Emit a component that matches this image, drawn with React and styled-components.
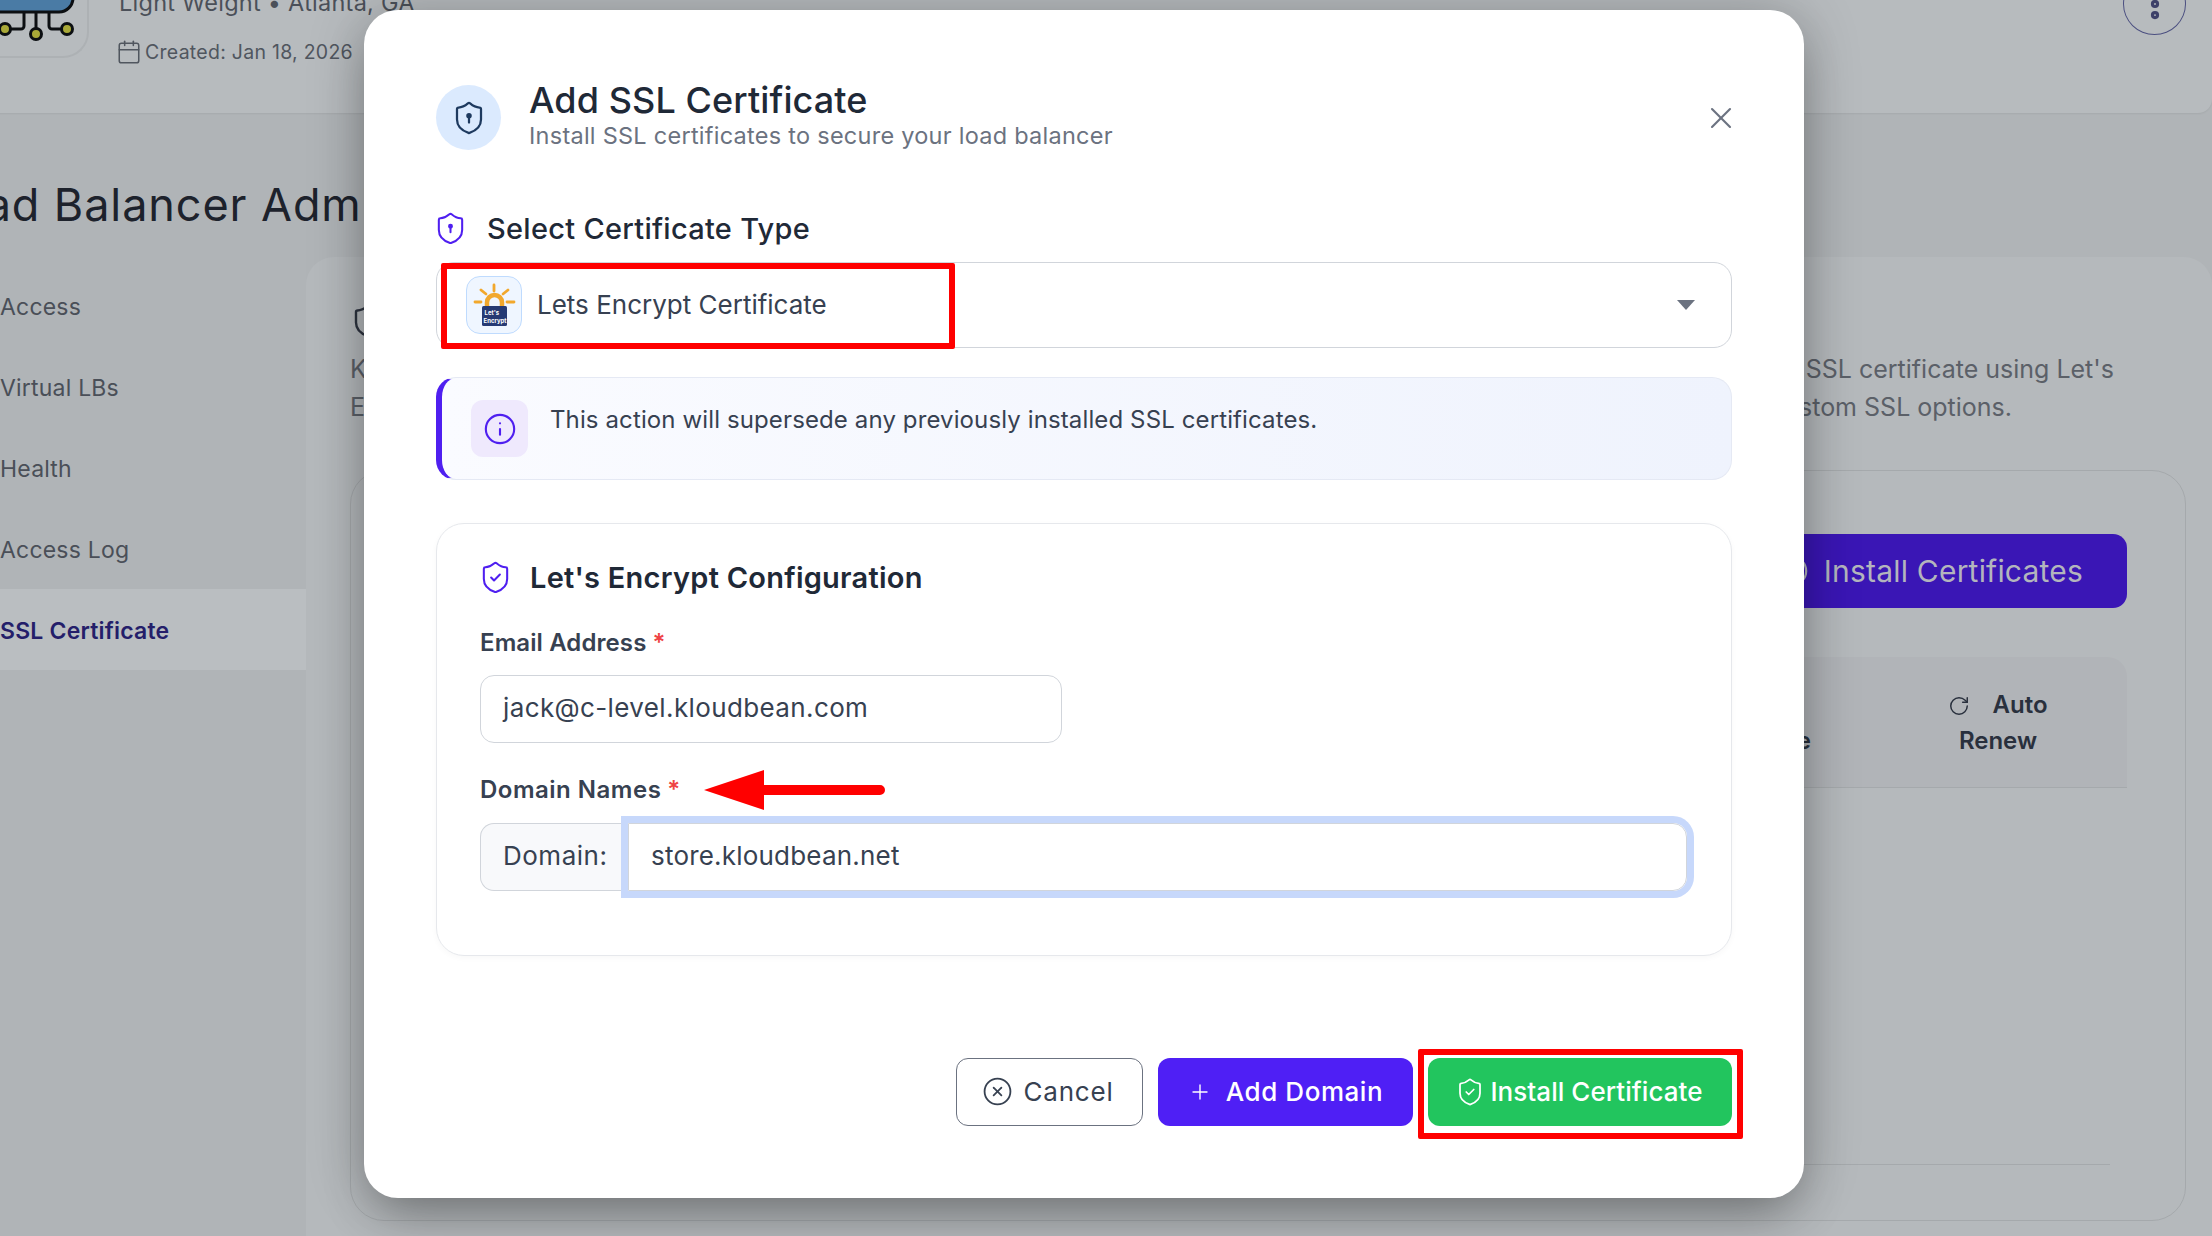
import React from "react";
import styled, { createGlobalStyle } from "styled-components";
import {
  Calendar,
  CircleCheck,
  CircleX,
  EllipsisVertical,
  Info,
  Plus,
  RotateCw,
  Shield,
  ShieldCheck,
  X,
} from "lucide-react";

const GlobalStyle = createGlobalStyle`
  html, body {
    margin: 0;
    padding: 0;
    background: #b0b4b7;
  }
  body {
    font-family: Inter, "Open Sans", "Liberation Sans", sans-serif;
  }
  * {
    box-sizing: border-box;
  }
`;

const Screen = styled.div`
  position: relative;
  width: 2212px;
  height: 1236px;
  overflow: hidden;
  background: #b0b4b7;
`;

/* page behind the dialog, scrolled a bit to the right and down */
const Page = styled.div`
  width: 2262px;
  margin: -60px 0 0 -50px;
`;

const TopCard = styled.header`
  display: flex;
  height: 173px;
  padding-right: 26px;
  background: #b7bbbe;
  border-radius: 0 0 14px 14px;
  box-shadow: 0 1px 2px rgba(0, 0, 0, 0.06);
`;

const ServerTile = styled.div`
  width: 139px;
  height: 118px;
  margin-right: 30px;
  border: 2px solid #adb1b4;
  border-left: 0;
  border-top: 0;
  border-radius: 0 0 26px 0;
  overflow: hidden;
`;

const ServerInfo = styled.div`
  flex: 1;
  padding-top: 48px;
`;

const ServerName = styled.div`
  height: 30px;
  font-size: 23.5px;
  line-height: 30px;
  letter-spacing: 0.25px;
  color: #4b5059;
`;

const Created = styled.div`
  display: flex;
  align-items: center;
  gap: 3px;
  height: 28px;
  margin-top: 20px;
  font-size: 19.5px;
  letter-spacing: 0.27px;
  color: #50565f;

  svg {
    margin-left: -3px;
  }
`;

const Kebab = styled.div`
  display: flex;
  align-items: center;
  justify-content: center;
  width: 63px;
  height: 62px;
  margin-top: 33px;
  border: 1px solid #4b4f80;
  border-radius: 50%;
  color: #3d4069;
`;

const PageTitle = styled.h1`
  height: 60px;
  margin: 62px 0 22px -19px;
  font-size: 45px;
  font-weight: 400;
  line-height: 60px;
  letter-spacing: 0.9px;
  color: #1d222c;
  white-space: nowrap;
`;

const Body = styled.div`
  display: flex;
  align-items: flex-start;
`;

const Sidebar = styled.nav`
  flex: none;
  width: 356px;
  padding-top: 7.5px;
`;

const SideItem = styled.div`
  display: flex;
  align-items: center;
  height: 81px;
  padding: 3px 0 0 50px;
  font-size: 23px;
  letter-spacing: 0.2px;
  font-weight: ${(p) => (p.$active ? 600 : 400)};
  color: ${(p) => (p.$active ? "#241e6a" : "#4a4f58")};
  background: ${(p) => (p.$active ? "#babec1" : "transparent")};
`;

const Panel = styled.main`
  flex: 1;
  height: 1000px;
  padding: 46px 26px 0 44px;
  background: #b5b9bc;
  border-radius: 28px 28px 0 0;
`;

const PanelIcon = styled.div`
  height: 30px;
  margin-bottom: 17px;
  color: #2e3440;
`;

const Description = styled.div`
  margin-bottom: 44px;
`;

const DescLine = styled.div`
  display: flex;
  justify-content: space-between;
  height: 38px;
  padding-right: ${(p) => p.$end}px;
  font-size: 25px;
  line-height: 38px;
  color: #5b6068;
`;

const InnerCard = styled.section`
  height: 751px;
  padding: 63px 58px 0 43px;
  border: 1px solid #a5a9ac;
  border-radius: 34px;
`;

const ActionBar = styled.div`
  display: flex;
  justify-content: flex-end;
  margin-bottom: 49px;
`;

const InstallAll = styled.div`
  display: flex;
  align-items: center;
  justify-content: flex-end;
  gap: 15px;
  width: 364px;
  height: 74px;
  padding-right: 44px;
  background: #3a16b5;
  border-radius: 14px;
  font-size: 30px;
  letter-spacing: 0.2px;
  color: #b3b5bd;
`;

const TableHead = styled.div`
  display: flex;
  justify-content: flex-end;
  padding: 30px 29px 28px 0;
  background: #b1b4b8;
  border-bottom: 1px solid #a5a9ac;
  border-radius: 20px 20px 0 0;
`;

const HeadCell = styled.div`
  width: ${(p) => p.$w}px;
  margin-right: ${(p) => p.$gap || 0}px;
  text-align: ${(p) => p.$align};
  font-size: 24px;
  font-weight: 600;
  line-height: 36px;
  color: #29303d;

  svg {
    margin-right: 22px;
    vertical-align: -4px;
  }
`;

const TableEnd = styled.div`
  height: 1px;
  margin: 376px 17px 0 0;
  background: #a5a9ac;
`;

const Overlay = styled.div`
  position: absolute;
  inset: 0;
  padding: 10px 0 0 364px;
`;

const Dialog = styled.div`
  display: flex;
  flex-direction: column;
  width: 1440px;
  height: 1188px;
  padding: 75px 72px 0;
  background: #fff;
  border-radius: 34px;
  box-shadow: 0 0 60px rgba(0, 0, 0, 0.2), 0 24px 50px -10px rgba(0, 0, 0, 0.3);
`;

const DialogHead = styled.div`
  display: flex;
  align-items: center;
  height: 65px;
`;

const HeadBadge = styled.div`
  display: flex;
  flex: none;
  align-items: center;
  justify-content: center;
  width: 65px;
  height: 65px;
  margin-right: 28px;
  background: #dbeafe;
  border-radius: 50%;
  color: #1e3a5f;
`;

const HeadText = styled.div`
  flex: 1;
  padding-bottom: 7px;
`;

const DialogTitle = styled.h2`
  margin: 0;
  font-size: 36px;
  font-weight: 500;
  line-height: 43px;
  letter-spacing: 0.1px;
  color: #1f2937;
`;

const DialogSub = styled.p`
  margin: 0;
  font-size: 23.5px;
  line-height: 28px;
  letter-spacing: 0.26px;
  color: #6b7280;
`;

const CloseIcon = styled.div`
  display: flex;
  margin-right: -7px;
  color: #6b7280;
`;

const SectionHead = styled.div`
  display: flex;
  align-items: center;
  gap: 24px;
  height: 30px;
  margin: 64px 0 18px;
  padding-bottom: 2px;
  font-size: 29px;
  font-weight: 500;
  letter-spacing: 0.28px;
  color: #1f2937;

  svg {
    margin: 0 -5px 0 -3px;
    color: #4f1ff0;
  }
`;

const Select = styled.div`
  position: relative;
  display: flex;
  align-items: center;
  height: 86px;
  padding: 0 36px 0 29px;
  border: 1px solid #d1d5db;
  border-radius: 18px;
  font-size: 26px;
  color: #374151;
`;

const LogoTile = styled.div`
  display: flex;
  align-items: center;
  justify-content: center;
  width: 56px;
  height: 58px;
  margin-right: 15px;
  background: #eff6ff;
  border: 1px solid #bfdbfe;
  border-radius: 14px;
`;

const SelectValue = styled.div`
  flex: 1;
  padding-bottom: 2px;
`;

const Caret = styled.div`
  width: 0;
  height: 0;
  border-left: 9px solid transparent;
  border-right: 9px solid transparent;
  border-top: 10px solid #6b7280;
`;

const Highlight = styled.div`
  position: absolute;
  top: 0;
  left: 4px;
  width: 514px;
  height: 86px;
  border: 6px solid #ff0000;
  border-radius: 2px;
  pointer-events: none;
`;

const Notice = styled.div`
  display: flex;
  height: 103px;
  margin-top: 29px;
  padding: 22px 0 0 29px;
  background: linear-gradient(90deg, #fafbff, #eff3fd);
  border: 1px solid #e5e9f4;
  border-left: 6px solid #4f1ff0;
  border-radius: 20px;
`;

const NoticeIcon = styled.div`
  display: flex;
  flex: none;
  align-items: center;
  justify-content: center;
  width: 57px;
  height: 57px;
  margin-right: 22px;
  background: #efe9fd;
  border-radius: 12px;
  color: #4f1ff0;
`;

const NoticeText = styled.div`
  padding-top: 3px;
  font-size: 24px;
  line-height: 34px;
  letter-spacing: 0.12px;
  color: #374151;
`;

const ConfigCard = styled.section`
  height: 433px;
  margin-top: 43px;
  padding: 39px 44px 0 43px;
  border: 1px solid #e6e8ec;
  border-radius: 28px;
  box-shadow: 0 2px 6px rgba(0, 0, 0, 0.03);
`;

const ConfigHead = styled.div`
  display: flex;
  align-items: center;
  gap: 24px;
  height: 30px;
  margin-bottom: 33px;
  padding-bottom: 1px;
  font-size: 29px;
  font-weight: 600;
  letter-spacing: 0.25px;
  color: #1f2937;

  svg {
    margin: 0 -7px 0 -2px;
    color: #4f1ff0;
  }
`;

const FieldLabel = styled.div`
  display: flex;
  align-items: center;
  gap: 6px;
  height: 34px;
  margin-bottom: ${(p) => p.$below}px;
  padding-bottom: 2px;
  font-size: 24px;
  font-weight: 600;
  letter-spacing: ${(p) => p.$ls}px;
  color: #374151;
`;

const Required = styled.span`
  color: #ef4444;
`;

const RedArrow = styled.svg`
  margin: 2px 0 0 17px;
`;

const TextField = styled.div`
  display: flex;
  align-items: center;
  width: 582px;
  height: 68px;
  margin-bottom: 30px;
  padding: 0 0 4px 22px;
  border: 1px solid #d1d5db;
  border-radius: 14px;
  font-size: 26px;
  letter-spacing: 0.38px;
  color: #374151;
`;

const DomainGroup = styled.div`
  display: flex;
  height: 68px;
`;

const DomainPrefix = styled.div`
  display: flex;
  flex: none;
  align-items: center;
  width: 148px;
  padding: 0 0 4px 22px;
  background: #f8f9fb;
  border: 1px solid #d1d5db;
  border-right: 0;
  border-radius: 14px 0 0 14px;
  font-size: 26px;
  letter-spacing: 0.5px;
  color: #374151;
`;

const DomainInput = styled.div`
  display: flex;
  flex: 1;
  align-items: center;
  padding: 0 0 4px 22px;
  border: 1px solid #d1d5db;
  border-radius: 0 14px 14px 0;
  box-shadow: 0 0 0 7px #c7d8fb;
  font-size: 26px;
  letter-spacing: 0.2px;
  color: #374151;
`;

const Actions = styled.div`
  display: flex;
  justify-content: flex-end;
  gap: 15px;
  margin-top: 102px;
`;

const Button = styled.div`
  position: relative;
  display: flex;
  align-items: center;
  justify-content: center;
  gap: ${(p) => p.$gap}px;
  width: ${(p) => p.$w}px;
  height: 68px;
  padding: 0 ${(p) => p.$shift || 0}px 1px 0;
  background: ${(p) => p.$bg};
  border: ${(p) => (p.$outline ? "1px solid #6b7280" : "0")};
  border-radius: 12px;
  font-size: 26px;
  font-weight: ${(p) => (p.$outline ? 400 : 500)};
  letter-spacing: ${(p) => p.$ls}px;
  color: ${(p) => p.$color};
`;

const ButtonMark = styled.div`
  position: absolute;
  top: -9px;
  left: -10px;
  right: -11px;
  bottom: -13px;
  border: 6px solid #ff0000;
  border-radius: 2px;
`;

const ServerLogo = () => (
  <svg width="137" height="116" viewBox="0 0 137 116">
    <rect x="26" y="20" width="97" height="52" rx="14" fill="#4a7ba5" stroke="#0c0f12" strokeWidth="3" />
    <g fill="none" stroke="#0c0f12" strokeWidth="3">
      <path d="M74 72v14a3 3 0 0 1-3 3H61" />
      <path d="M86 72v16" />
      <path d="M99 72v14a3 3 0 0 0 3 3h10" />
    </g>
    <g fill="#a9a938" stroke="#0c0f12" strokeWidth="3">
      <circle cx="55" cy="89" r="5.5" />
      <circle cx="86" cy="94" r="5.5" />
      <circle cx="117" cy="89" r="5.5" />
    </g>
  </svg>
);

const LetsEncryptLogo = () => (
  <svg width="54" height="56" viewBox="1 1 54 56">
    <g stroke="#f2a82c" strokeWidth="2.8" strokeLinecap="round" fill="none">
      <path d="M28 9v6" />
      <path d="M15 14l5 4" />
      <path d="M42 14l-5 4" />
      <path d="M9 26h6" />
      <path d="M41 26h7" />
    </g>
    <path d="M21 31v-4.5a7.5 7.5 0 0 1 15 0V31" fill="none" stroke="#f2a82c" strokeWidth="4.5" />
    <rect x="16" y="30" width="25" height="20" rx="1.5" fill="#263a73" />
    <text x="18.5" y="39" fontSize="6" fontWeight="700" fill="#fff" fontFamily="Inter, sans-serif">Let's</text>
    <text x="17.5" y="46.5" fontSize="6" fontWeight="700" fill="#fff" fontFamily="Inter, sans-serif">Encrypt</text>
  </svg>
);

const App = () => (
  <Screen>
    <GlobalStyle />
    <Page>
      <TopCard>
        <ServerTile>
          <ServerLogo />
        </ServerTile>
        <ServerInfo>
          <ServerName>Light Weight • Atlanta, GA</ServerName>
          <Created>
            <Calendar size={26} strokeWidth={1.4} />
            Created: Jan 18, 2026
          </Created>
        </ServerInfo>
        <Kebab>
          <EllipsisVertical size={38} strokeWidth={3.2} />
        </Kebab>
      </TopCard>
      <PageTitle>Load Balancer Admin</PageTitle>
      <Body>
        <Sidebar>
          <SideItem>Access</SideItem>
          <SideItem>Virtual LBs</SideItem>
          <SideItem>Health</SideItem>
          <SideItem>Access Log</SideItem>
          <SideItem $active>SSL Certificate</SideItem>
        </Sidebar>
        <Panel>
          <PanelIcon>
            <Shield size={36} strokeWidth={1.6} />
          </PanelIcon>
          <Description>
            <DescLine $end={72}>
              <span>Kloudbean</span>
              <span>SSL certificate using Let's</span>
            </DescLine>
            <DescLine $end={174}>
              <span>Encrypt</span>
              <span>custom SSL options.</span>
            </DescLine>
          </Description>
          <InnerCard>
            <ActionBar>
              <InstallAll>
                <CircleCheck size={34} strokeWidth={1.6} />
                Install Certificates
              </InstallAll>
            </ActionBar>
            <TableHead>
              <HeadCell $w={100} $gap={87} $align="right">
                <br />
                Date
              </HeadCell>
              <HeadCell $w={200} $align="center">
                <RotateCw size={22} strokeWidth={1.6} />
                Auto
                <br />
                Renew
              </HeadCell>
            </TableHead>
            <TableEnd />
          </InnerCard>
        </Panel>
      </Body>
    </Page>

    <Overlay>
      <Dialog>
        <DialogHead>
          <HeadBadge>
            <Shield size={36} strokeWidth={1.5}>
              <circle cx="12" cy="10.5" r="1.1" fill="currentColor" />
              <path d="M12 11v4" />
            </Shield>
          </HeadBadge>
          <HeadText>
            <DialogTitle>Add SSL Certificate</DialogTitle>
            <DialogSub>Install SSL certificates to secure your load balancer</DialogSub>
          </HeadText>
          <CloseIcon>
            <X size={36} strokeWidth={1.4} />
          </CloseIcon>
        </DialogHead>

        <SectionHead>
          <Shield size={35} strokeWidth={1.4}>
            <circle cx="12" cy="10.5" r="1" fill="currentColor" />
            <path d="M12 11v3.5" />
          </Shield>
          Select Certificate Type
        </SectionHead>
        <Select>
          <LogoTile>
            <LetsEncryptLogo />
          </LogoTile>
          <SelectValue>Lets Encrypt Certificate</SelectValue>
          <Caret />
          <Highlight />
        </Select>

        <Notice>
          <NoticeIcon>
            <Info size={34} strokeWidth={1.5} />
          </NoticeIcon>
          <NoticeText>This action will supersede any previously installed SSL certificates.</NoticeText>
        </Notice>

        <ConfigCard>
          <ConfigHead>
            <ShieldCheck size={35} strokeWidth={1.4} />
            Let's Encrypt Configuration
          </ConfigHead>
          <FieldLabel $below={15} $ls={0.1}>
            Email Address <Required>*</Required>
          </FieldLabel>
          <TextField>jack@c-level.kloudbean.com</TextField>
          <FieldLabel $below={16} $ls={0.5}>
            Domain Names <Required>*</Required>
            <RedArrow width="181" height="40" viewBox="0 0 181 40">
              <path d="M0 20L60 0v15h116a5 5 0 0 1 0 10H60v15z" fill="#ff0000" />
            </RedArrow>
          </FieldLabel>
          <DomainGroup>
            <DomainPrefix>Domain:</DomainPrefix>
            <DomainInput>store.kloudbean.net</DomainInput>
          </DomainGroup>
        </ConfigCard>

        <Actions>
          <Button $w={187} $gap={10} $shift={3} $ls={0.8} $bg="#fff" $color="#374151" $outline>
            <CircleX size={31} strokeWidth={1.4} />
            Cancel
          </Button>
          <Button $w={255} $gap={14} $ls={0.55} $bg="#4f1ff5" $color="#fff">
            <Plus size={24} strokeWidth={1.4} />
            Add Domain
          </Button>
          <Button $w={304} $gap={5} $shift={2} $ls={0.05} $bg="#22c55e" $color="#fff">
            <ShieldCheck size={30} strokeWidth={1.4} />
            Install Certificate
            <ButtonMark />
          </Button>
        </Actions>
      </Dialog>
    </Overlay>
  </Screen>
);

export default App;
